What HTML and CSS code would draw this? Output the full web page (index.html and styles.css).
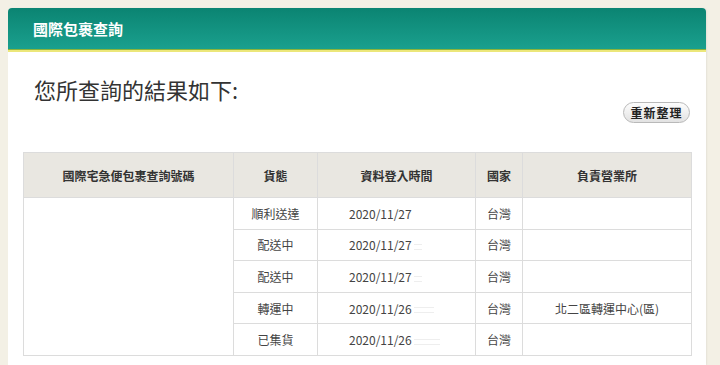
FILE: index.html
```html
<!DOCTYPE html>
<html lang="zh-Hant">
<head>
<meta charset="utf-8">
<title>國際包裹查詢</title>
<link rel="stylesheet" href="styles.css">
</head>
<body>
<div class="panel">
  <div class="panel-head">國際包裹查詢</div>
  <div class="panel-body">
    <h1 class="result-title">您所查詢的結果如下:</h1>
    <div class="tools">
      <button class="btn-refresh" type="button">重新整理</button>
    </div>
    <table class="track">
      <colgroup>
        <col class="c1"><col class="c2"><col class="c3"><col class="c4"><col class="c5">
      </colgroup>
      <thead>
        <tr>
          <th>國際宅急便包裹查詢號碼</th>
          <th>貨態</th>
          <th>資料登入時間</th>
          <th>國家</th>
          <th>負責營業所</th>
        </tr>
      </thead>
      <tbody>
        <tr>
          <td rowspan="5" class="num"></td>
          <td>順利送達</td>
          <td class="time">2020/11/27</td>
          <td>台灣</td>
          <td></td>
        </tr>
        <tr>
          <td>配送中</td>
          <td class="time">2020/11/27<span class="blur s1"></span></td>
          <td>台灣</td>
          <td></td>
        </tr>
        <tr>
          <td>配送中</td>
          <td class="time">2020/11/27<span class="blur s1"></span></td>
          <td>台灣</td>
          <td></td>
        </tr>
        <tr>
          <td>轉運中</td>
          <td class="time">2020/11/26<span class="blur s2"></span></td>
          <td>台灣</td>
          <td>北二區轉運中心(區)</td>
        </tr>
        <tr>
          <td>已集貨</td>
          <td class="time">2020/11/26<span class="blur s3"></span></td>
          <td>台灣</td>
          <td></td>
        </tr>
      </tbody>
    </table>
  </div>
</div>
</body>
</html>
```
FILE: styles.css
```css
html, body {
  margin: 0;
  padding: 0;
  background: #f3f0e5;
}
body {
  padding: 8px 14px 0 8px;
  font-family: "Noto Sans CJK TC", "Noto Sans", "Liberation Sans", sans-serif;
  color: #333;
}
.panel {
  width: 698px;
  background: #fff;
  border-radius: 4px 4px 0 0;
  min-height: 357px;
  box-shadow: 1px 0 2px rgba(0,0,0,0.06);
}
.panel-head {
  height: 42px;
  box-sizing: border-box;
  padding: 0 0 0 25px;
  display: flex;
  align-items: center;
  color: #fff;
  font-size: 15px;
  font-weight: bold;
  background: linear-gradient(#0b8472, #1aa08e);
  border-radius: 4px 4px 0 0;
  border-bottom: 1px solid #8ab33b;
  box-shadow: 0 2px 0 #ece77a;
}
.panel-body {
  padding: 26px 15px 0 15px;
}
.result-title {
  margin: 0 0 0 11px;
  font-size: 22px;
  line-height: 26px;
  font-weight: normal;
  color: #333;
}
.tools {
  display: flex;
  justify-content: flex-end;
  padding-right: 1px;
}
.btn-refresh {
  width: 67px;
  height: 21px;
  padding: 0;
  border: 1px solid #b9b9b9;
  border-radius: 11px;
  background: linear-gradient(#fdfdfd, #e2e2e2);
  font-family: "Noto Sans CJK TC", sans-serif;
  font-size: 12px;
  font-weight: bold;
  letter-spacing: 1px;
  color: #222;
  line-height: 19px;
}
.track {
  margin-top: 29px;
  width: 668px;
  border-collapse: collapse;
  table-layout: fixed;
  font-size: 12px;
}
.c1 { width: 210px; }
.c2 { width: 84px; }
.c3 { width: 158px; }
.c4 { width: 47px; }
.c5 { width: 169px; }
.track th, .track td {
  border: 1px solid #dcdcdc;
  text-align: center;
  padding: 0;
}
.track th {
  height: 44px;
  background: #e9e7e1;
  font-weight: bold;
  color: #333;
}
.track td {
  height: 30.6px;
  color: #444;
}
.track td.time {
  text-align: left;
  padding-left: 31px;
}
.blur {
  display: inline-block;
  height: 4px;
  vertical-align: middle;
  border-top: 1px solid #eee;
  border-bottom: 1px solid #eee;
  margin-left: 2px;
}
.s1 { width: 8px; }
.s2 { width: 20px; }
.s3 { width: 26px; }
```
